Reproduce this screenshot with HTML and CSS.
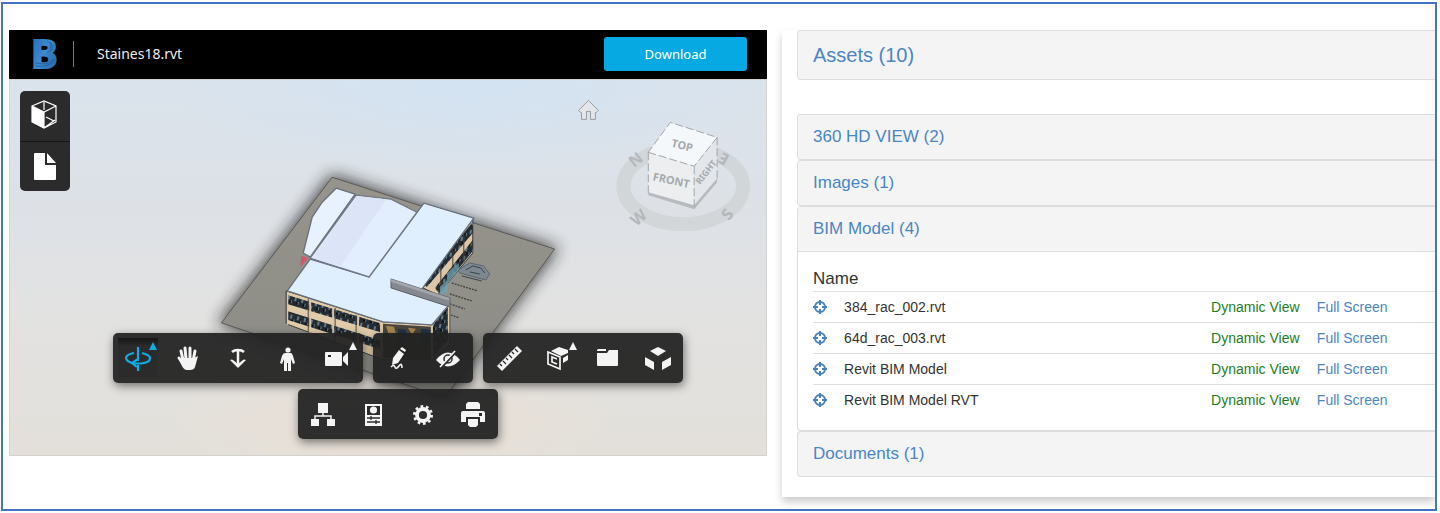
FILE: index.html
```html
<!DOCTYPE html>
<html lang="en">
<head>
<meta charset="utf-8">
<meta name="viewport" content="width=device-width, initial-scale=1">
<title>Staines18.rvt</title>
<link rel="stylesheet" href="styles.css">
</head>
<body>
<div class="frame">
  <main class="viewer">
    <header class="viewer-header">
      <svg class="logo" viewBox="0 0 24 32" aria-hidden="true">
        <defs>
          <linearGradient id="logo-fill" x1="0" y1="0" x2="1" y2="1">
            <stop offset="0" stop-color="#1c62a8"/><stop offset=".5" stop-color="#3c8ad0"/><stop offset="1" stop-color="#1d5c9f"/>
          </linearGradient>
        </defs>
        <text class="logo-letter" x="-2" y="30" fill="url(#logo-fill)" stroke="url(#logo-fill)">B</text>
        <path d="M3 28C11 29 19 27 22 21M3 25c8 2 14 0 17-4M14 3c5 3 5 9 0 12M17 4c3 3 3 7 0 10" fill="none" stroke="#134680" stroke-width="1" opacity=".5"/>
      </svg>
      <h1 class="file-name">Staines18.rvt</h1>
      <button class="download" type="button">Download</button>
    </header>

    <section class="scene" aria-label="Model view">
      <svg class="scene-art" viewBox="9 79 758 377" preserveAspectRatio="xMidYMid slice">
        <defs>
          <linearGradient id="sky" x1="0" y1="0" x2="0" y2="1">
            <stop offset="0" stop-color="#dae3ec"/><stop offset=".35" stop-color="#dde1e6"/><stop offset=".6" stop-color="#e2e2e2"/><stop offset="1" stop-color="#e3e0da"/>
          </linearGradient>
          <radialGradient id="sky-blue"><stop offset="0" stop-color="#d3e3f2"/><stop offset="1" stop-color="#d3e3f2" stop-opacity="0"/></radialGradient>
          <radialGradient id="warm"><stop offset="0" stop-color="#eadfd4"/><stop offset="1" stop-color="#eadfd4" stop-opacity="0"/></radialGradient>
          <filter id="soft" x="-20%" y="-20%" width="140%" height="140%"><feGaussianBlur stdDeviation="8"/></filter>
          <linearGradient id="ground" x1="0" y1="0" x2="0" y2="1"><stop offset="0" stop-color="#96948b"/><stop offset="1" stop-color="#8b8b86"/></linearGradient>
          <pattern id="glass" width="7" height="9" patternUnits="userSpaceOnUse" patternTransform="rotate(14)">
            <rect width="7" height="9" fill="#252b30"/><path d="M1 1h2v4H1zM5 5h1v3H5z" fill="#5f7d8c"/><path d="M3 6h2v2H3z" fill="#0b0d10"/>
          </pattern>
        </defs>
        <rect x="9" y="79" width="758" height="377" fill="url(#sky)"/>
        <ellipse cx="470" cy="85" rx="300" ry="90" fill="url(#sky-blue)"/>
        <ellipse cx="390" cy="420" rx="230" ry="60" fill="url(#warm)"/>

        <path d="M332 177 555 249 445 398 221 323z" fill="#222" stroke="#222" stroke-width="5" opacity=".8" filter="url(#soft)"/>
        <path d="M332 177 555 249 445 398 221 323z" fill="url(#ground)" stroke="#5b5a57"/>

        <!-- parking bays and car -->
        <g stroke="#454542" stroke-width="1.4" stroke-dasharray="2 1">
          <path d="M452 283l26 8M450 294l22 7M450 304l15 5M451 315l8 3"/>
        </g>
        <path d="M458 270l12-7 14 3 6 8-4 6-26-7z" fill="#7c8790" stroke="#5b656d"/>
        <path d="M466 270l7-4 8 2 4 5M462 276l20 5M470 272l10 2" fill="none" stroke="#39424a"/>

        <!-- east walls -->
        <path d="M473 219v34l-35 42-15-7z" fill="#ddc6a6" stroke="#3b3733"/>
        <path d="M473 222v11l-46 54-4-4zM473 240v11l-34 42-4-5z" fill="url(#glass)"/>
        <path d="M464 232v30M453 246v30M441 260v30" stroke="#443e38"/>
        <path d="M447 273l12-10v7l-12 14zM440 287l8-8v13l-8 4z" fill="#6fa3b0" opacity=".75"/>

        <!-- south walls -->
        <path d="M286 291 383 322 432 325 450 302V345L432 359 383 360 286 324z" fill="#e2cba9" stroke="#433f3b"/>
        <path d="M287 295l95 29v9l-95-29zM287 311l95 30v9l-95-30z" fill="url(#glass)"/>
        <path d="M383 324l49 3v34l-49-3z" fill="#4b463c"/>
        <path d="M386 326l8 1 2 7-7 2zM408 328l8 1-4 6z" fill="#a8884f"/>
        <path d="M398 329l8 1v18l-8-2zM421 329l9 1v18l-9-3z" fill="#213548"/>
        <path d="M433 325l15-18v34l-15 16z" fill="url(#glass)"/>
        <path d="M287 292v33M310 300v33M333 307v34M358 315v33M381 322v34M432 326v34" stroke="#d8c7ad" stroke-width="2"/>
        <path d="M286 291v33M308 299v33M335 308v34M356 315v33" stroke="#4c4640"/>

        <!-- roofs -->
        <path d="M301 256l7 2-8 9z" fill="#d4566a"/>
        <path d="M336 188 355 194 310 257 303 253 312 217 322 202z" fill="#e7f2fe" stroke="#67707d" stroke-width="1.3"/>
        <path d="M310 259 369 277 424 203 474 218 422 289 449 305 432 325 383 322 287 291z" fill="#e0effd" stroke="#67707d" stroke-width="1.3"/>
        <path d="M356 195 391 199 417 212 369 277 310 258z" fill="#e2eefe" stroke="#737885" stroke-width="1.3"/>
        <path d="M357 196 386 199 340 267 312 258z" fill="#dbe5f7"/>
        <path d="M391 279 450 298v9L391 288z" fill="#85898f" stroke="#5b5f65"/>
        <path d="M391 279 450 298v3L391 282z" fill="#a2a5aa"/>
        <path d="M450 298v36" stroke="#777b80" stroke-width="1.5"/>

        <!-- home -->
        <path d="M579 110l10-10 10 10-2 2h-1v7h-5v-8h-4v8h-5v-7h-1z" fill="#e3e6e9" stroke="#9a9ea2"/>

        <!-- compass and view cube -->
        <ellipse cx="684" cy="186" rx="60" ry="38" fill="none" stroke="#cdd1d4" stroke-width="14" opacity=".75"/>
        <g class="compass-label">
          <text x="636" y="165" transform="rotate(-38 636 159)">N</text>
          <text x="725" y="163" transform="rotate(-150 725 158)">E</text>
          <text x="639" y="223" transform="rotate(-40 639 217)">W</text>
          <text x="728" y="220" transform="rotate(-50 728 214)">S</text>
        </g>
        <path d="M649 152 695 166 695 209 649 194z" fill="#eceef0"/>
        <path d="M671 122 718 137 695 166 649 152z" fill="#f5f8fa"/>
        <path d="M718 137V180L695 209V166z" fill="#e3e7eb"/>
        <path d="M649 192 695 205 718 178V182L695 209 649 195z" fill="#b8bbbe"/>
        <path d="M649 152 695 166 718 137 671 122zM649 152V193M695 166V208M718 137V180" fill="none" stroke="#a2a6a9" stroke-dasharray="8 3"/>
        <g class="cube-label">
          <text x="683" y="149" transform="rotate(14 683 145)">TOP</text>
          <text x="672" y="184" transform="rotate(12 672 180)">FRONT</text>
          <text class="cube-side" x="707" y="175" transform="rotate(-52 707 172)">RIGHT</text>
        </g>
      </svg>

      <div class="side-tools">
        <button class="tool" type="button" aria-label="3D views"><svg viewBox="0 0 50 50"><path d="M12 15 24 21V37L12 31z" fill="#fff"/><path d="M12 15 24 10 36 15V31L24 37 12 31zM12 15l12 6 12-6M24 21v16M24 11v8M26 26l8 4M24 37l11-8" fill="none" stroke="#fff" stroke-width="1.2"/></svg></button>
        <button class="tool" type="button" aria-label="Sheets"><svg viewBox="0 0 50 50"><path d="M15 11h10v12h11v14q0 1-1 1H15q-1 0-1-1V12q0-1 1-1zM27 11l9 10h-9z" fill="#fff"/></svg></button>
      </div>

      <div class="toolbars">
        <div class="toolbar-row">
          <div class="toolbar">
            <button class="tool tool-active" type="button" aria-label="Orbit"><svg viewBox="0 0 50 50"><path d="M25 14v14M25 32v6M21 20c-5 1-8 3-8 5 0 3 3 4 6 5M29 20c4 1 8 3 8 5 0 3-4 5-9 5.500h-8" fill="none" stroke="#12ace5" stroke-width="2.200"/><path d="M25 26l-6 4 5 4" fill="none" stroke="#12ace5" stroke-width="2.200"/><path d="M36 17l4-8 4 8z" fill="#12ace5"/></svg></button>
            <button class="tool" type="button" aria-label="Pan"><svg viewBox="0 0 50 50"><path d="M18 18l2 9M22 15l1 11M27 15v11M32 18l-2 10M16 25l5 7" fill="none" stroke="#f4f4f4" stroke-width="3" stroke-linecap="round"/><path d="M19 25h12l4-2-3 11q-1 3-5 3h-3q-3 0-5-4l-3-6z" fill="#f4f4f4"/></svg></button>
            <button class="tool" type="button" aria-label="Zoom"><svg viewBox="0 0 50 50"><path d="M25 17v16M19 19q2-2 6-2t6 2" fill="none" stroke="#f4f4f4" stroke-width="2.500"/><path d="M17 27q2-1 3 0l5 4 5-4q1-1 3 0l-8 8z" fill="#f4f4f4"/></svg></button>
            <button class="tool" type="button" aria-label="First person"><svg viewBox="0 0 50 50"><circle cx="25" cy="17" r="2.600" fill="#f4f4f4"/><path d="M22 20h6q1 0 2 3l2 7-2 1-2-5v12h-3v-8h-1v8h-3V26l-2 5-2-1 2-7q1-3 3-3z" fill="#f4f4f4"/></svg></button>
            <button class="tool" type="button" aria-label="Camera"><svg viewBox="0 0 50 50"><path fill-rule="evenodd" d="M13 19h15q1 0 1 1v12q0 1-1 1H13q-1 0-1-1V20q0-1 1-1zm2 3v2h3v-2zM30 24l5-5v14l-5-5z" fill="#f4f4f4"/><path d="M36 17l4-8 4 8z" fill="#f4f4f4"/></svg></button>
          </div>
          <div class="toolbar">
            <button class="tool" type="button" aria-label="Markup"><svg viewBox="0 0 50 50"><path d="M26 17l5 4-6 9-6 2 1-7zM27 16l2-2 4 3-1 2z" fill="#f4f4f4"/><path d="M18 34q3-3 4 0t4-1 3 2" fill="none" stroke="#f4f4f4" stroke-width="1.600"/></svg></button>
            <button class="tool" type="button" aria-label="Hide"><svg viewBox="0 0 50 50"><path d="M13 27q12-15 24 0-12 13-24 0z" fill="#f4f4f4"/><circle cx="25" cy="26" r="4" fill="none" stroke="#2b2b2b" stroke-width="1.500"/><path d="M19 34L33 19" stroke="#2b2b2b" stroke-width="2"/><path d="M17 34L32 18" stroke="#f4f4f4" stroke-width="1.700"/></svg></button>
          </div>
          <div class="toolbar">
            <button class="tool" type="button" aria-label="Measure"><svg viewBox="0 0 50 50"><path d="M34 13l5 5-20 20-5-5z" fill="#f4f4f4"/><path d="M17 31l2 2M20 28l3 3M23 25l2 2M26 22l3 3M29 19l2 2M32 16l3 3" stroke="#2b2b2b" stroke-width="1.300"/></svg></button>
            <button class="tool" type="button" aria-label="Section"><svg viewBox="0 0 50 50"><path d="M18 18l8-4 9 3v3l-7 3zM30 25l5-3v5l-5 3z" fill="#f4f4f4"/><path d="M15 19l12 5v12l-12-5zM24 26l-5-2v5l5 2" fill="none" stroke="#f4f4f4" stroke-width="1.700"/><path d="M36 17l4-8 4 8z" fill="#f4f4f4"/></svg></button>
            <button class="tool" type="button" aria-label="Documents"><svg viewBox="0 0 50 50"><path d="M15 16h8v2h-9v-1zM14 20h10l2-3h9v15q0 1-1 1H15q-1 0-1-1z" fill="#f4f4f4"/></svg></button>
            <button class="tool" type="button" aria-label="Explode"><svg viewBox="0 0 50 50"><path d="M25 14l8 4-8 5-8-5zM12 24l9 5v8l-9-5zM38 24l-9 5v8l9-5z" fill="#f4f4f4"/></svg></button>
          </div>
        </div>
        <div class="toolbar">
          <button class="tool" type="button" aria-label="Model browser"><svg viewBox="0 0 50 50"><path d="M20 14h10v10H20zM13 30h8v7h-8zM29 30h8v7h-8z" fill="#f4f4f4"/><path d="M25 24v3M17 31v-4h16v4" fill="none" stroke="#f4f4f4" stroke-width="1.500"/></svg></button>
          <button class="tool" type="button" aria-label="Properties"><svg viewBox="0 0 50 50"><path d="M17 15h17v22H17z" fill="#f4f4f4"/><path d="M19 17h13v9H19z" fill="#2b2b2b"/><circle cx="25.500" cy="21" r="3.600" fill="#f4f4f4"/><path d="M19 29h13M19 33h13M23 27v4M28 31v4" stroke="#2b2b2b" stroke-width="1.300"/></svg></button>
          <button class="tool" type="button" aria-label="Settings"><svg viewBox="0 0 50 50"><circle cx="25" cy="26" r="6" fill="none" stroke="#f4f4f4" stroke-width="3.800"/><circle cx="25" cy="26" r="8.500" fill="none" stroke="#f4f4f4" stroke-width="3" stroke-dasharray="2.600 2.740"/></svg></button>
          <button class="tool" type="button" aria-label="Print"><svg viewBox="0 0 50 50"><path d="M20 13h10l2 2v5H18v-5zM15 22h20q2 0 2 2v9h-5v-5H18v5h-5v-9q0-2 2-2zM20 30h10v6l-2 2h-6l-2-2z" fill="#f4f4f4"/><path d="M31 24h3v3h-3z" fill="#2b2b2b"/></svg></button>
        </div>
      </div>
    </section>
  </main>

  <aside class="assets">
    <h2 class="panel heading heading-main"><a href="#assets">Assets (10)</a></h2>
    <div class="panel-group">
      <h3 class="panel heading"><a href="#hd">360 HD VIEW (2)</a></h3>
      <h3 class="panel heading"><a href="#images">Images (1)</a></h3>
      <section class="panel">
        <h3 class="heading heading-open"><a href="#bim">BIM Model (4)</a></h3>
        <div class="panel-body">
          <table class="models">
            <colgroup><col class="col-icon"><col><col class="col-dynamic"><col class="col-full"></colgroup>
            <thead><tr><th colspan="4" scope="col">Name</th></tr></thead>
            <tbody>
              <tr><td><svg class="target" viewBox="0 0 14 14"><use href="#crosshair"/></svg></td><td>384_rac_002.rvt</td><td><a class="dynamic" href="#d1">Dynamic View</a></td><td><a href="#f1">Full Screen</a></td></tr>
              <tr><td><svg class="target" viewBox="0 0 14 14"><use href="#crosshair"/></svg></td><td>64d_rac_003.rvt</td><td><a class="dynamic" href="#d2">Dynamic View</a></td><td><a href="#f2">Full Screen</a></td></tr>
              <tr><td><svg class="target" viewBox="0 0 14 14"><use href="#crosshair"/></svg></td><td>Revit BIM Model</td><td><a class="dynamic" href="#d3">Dynamic View</a></td><td><a href="#f3">Full Screen</a></td></tr>
              <tr><td><svg class="target" viewBox="0 0 14 14"><use href="#crosshair"/></svg></td><td>Revit BIM Model RVT</td><td><a class="dynamic" href="#d4">Dynamic View</a></td><td><a href="#f4">Full Screen</a></td></tr>
            </tbody>
          </table>
        </div>
      </section>
      <h3 class="panel heading"><a href="#documents">Documents (1)</a></h3>
    </div>
  </aside>
</div>
<svg class="symbols" aria-hidden="true"><symbol id="crosshair" viewBox="0 0 14 14"><circle cx="7" cy="7" r="5" fill="none" stroke="#4a80bd" stroke-width="2"/><path d="M7 0v5M7 9v5M0 7h5M9 7h5" stroke="#4a80bd" stroke-width="2"/></symbol></svg>
</body>
</html>
```
FILE: styles.css
```css
* { box-sizing: border-box; }

body {
  margin: 0;
  padding: 2px 3px 2px 1px;
  background: #fff;
  color: #333;
  font: 14px/20px "Liberation Sans", Arial, sans-serif;
}

a { color: #4a86c5; text-decoration: none; }
h1, h2, h3 { margin: 0; font-weight: 400; }

.frame {
  display: grid;
  grid-template-columns: 779fr 653fr;
  min-height: calc(100vh - 4px);
  padding-top: 26px;
  overflow: hidden;
  border: 2px solid #4472c4;
}

.viewer { padding: 0 15px 0 6px; }

.viewer-header {
  display: flex;
  align-items: center;
  height: 49px;
  padding: 0 20px 2px 24px;
  background: #000;
}

.logo { width: 24px; height: 32px; overflow: visible; }
.logo-letter { font: 700 40px "Noto Sans", sans-serif; stroke-width: 2px; }

.file-name {
  margin-left: 16px;
  padding-left: 23px;
  border-left: 1px solid #777;
  color: #eee;
  font: 14px/26px "Noto Sans", sans-serif;
}

.download {
  width: 143px;
  height: 34px;
  margin-left: auto;
  padding: 0;
  border: 0;
  border-radius: 3px;
  background: #06a9e1;
  color: #fff;
  font: 13px/20px "Noto Sans", sans-serif;
}

.scene {
  position: relative;
  height: 377px;
  overflow: hidden;
  border: 1px solid #d2d2d0;
}

.scene-art {
  position: absolute;
  inset: 0;
  width: 100%;
  height: 100%;
}

.compass-label { fill: #b4b8bc; font: 700 16px "Noto Sans", sans-serif; text-anchor: middle; }
.cube-label { fill: #a5a9ad; font: 700 11px "Noto Sans", sans-serif; text-anchor: middle; }
.cube-side { font-size: 9px; }

.side-tools {
  position: absolute;
  top: 11px;
  left: 10px;
  overflow: hidden;
  border-radius: 5px;
  background: #2b2b2c;
}
.side-tools .tool + .tool { border-top: 1px solid #171717; }

.toolbars {
  position: absolute;
  right: 0;
  bottom: 16px;
  left: 20px;
  display: flex;
  flex-direction: column;
  align-items: center;
  gap: 6px;
}
.toolbar-row { display: flex; gap: 10px; }
.toolbar {
  display: flex;
  border-radius: 5px;
  background: rgba(34, 34, 34, .94);
  box-shadow: 1px 3px 10px rgba(0, 0, 0, .5);
}

.tool {
  display: block;
  width: 50px;
  height: 50px;
  padding: 0;
  border: 0;
  background: none;
}
.tool svg { display: block; width: 50px; height: 50px; }
.tool-active {
  background: linear-gradient(#161616, #2b2b2b 8px) center / 40px 40px no-repeat;
}

.assets {
  align-self: start;
  padding: 0 0 20px 15px;
  box-shadow: 0 5px 8px rgba(0, 0, 0, .2);
}

.panel {
  border: 1px solid #ddd;
  border-right: 0;
  border-radius: 4px 0 0 4px;
}
.heading {
  padding: 12px 15px;
  background: #f4f4f4;
  font-size: 17px;
  line-height: 20px;
}
.heading-main { padding: 14px 15px; font-size: 20px; }
.heading-open { border-bottom: 1px solid #ddd; }
.panel-group { margin-top: 34px; }
.panel-body { padding: 15px 0 14px 15px; }

.models { width: 100%; border-collapse: collapse; table-layout: fixed; }
.models th { padding: 2px 0; font-size: 17px; font-weight: 400; text-align: left; }
.models td { height: 31px; padding: 0; border-top: 1px solid #ddd; white-space: nowrap; }
.col-icon { width: 5%; }
.col-dynamic { width: 17%; }
.col-full { width: 19%; }
.target { display: block; width: 14px; height: 14px; }
.models a.dynamic { color: #1d7d1d; }
.symbols { display: none; }
```
